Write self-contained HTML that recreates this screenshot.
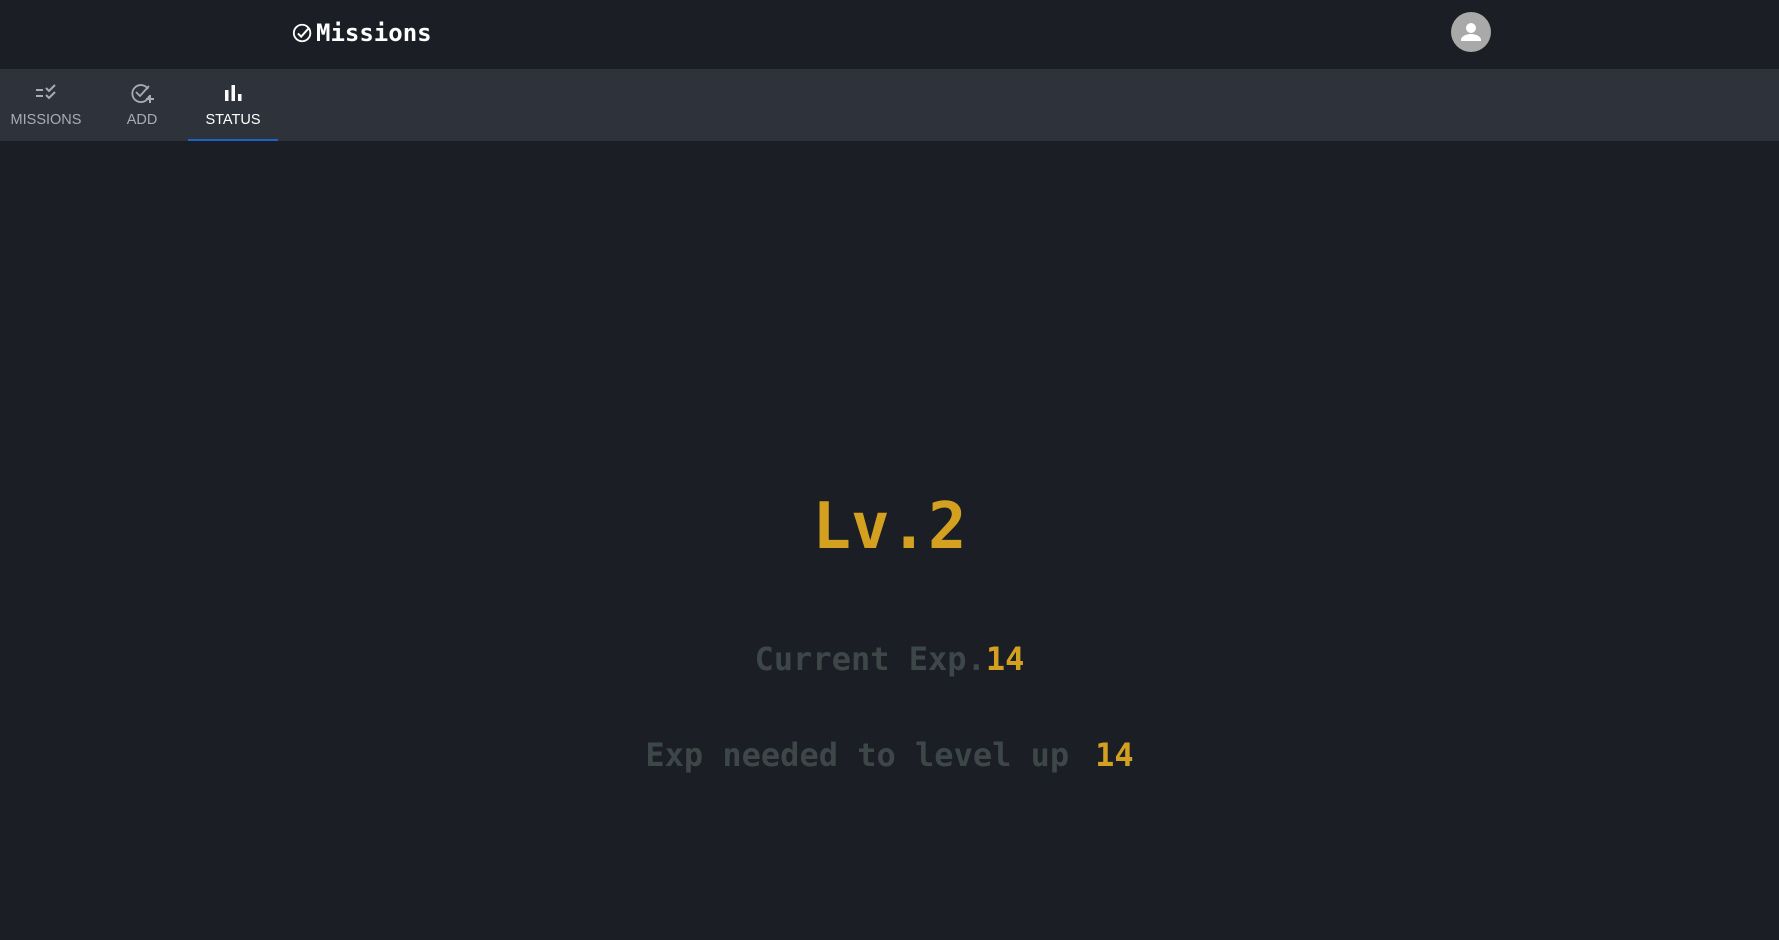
<!DOCTYPE html>
<html><head><meta charset="utf-8"><style>
*{margin:0;padding:0;box-sizing:border-box}
body{width:1779px;height:940px;background:#1b1e25;overflow:hidden;font-family:"Liberation Sans",sans-serif;position:relative}
.hdr{position:absolute;left:0;top:0;width:1779px;height:69px;background:#1b1e25}
.logo{position:absolute;left:292px;top:19px;display:flex;align-items:center;color:#fff;font:bold 24px "DejaVu Sans Mono","Liberation Mono",monospace}
.av{position:absolute;left:1451px;top:12px;width:40px;height:40px;border-radius:50%;background:#a9a9a9}
.nav{position:absolute;left:0;top:69px;width:1779px;height:72px;background:#2e323b}
.tab{position:absolute;top:0;height:72px;text-align:center;color:#a9acb2;font-size:14.5px}
.tab svg{position:absolute;top:14px}
.tab span{position:absolute;top:43px;left:0;right:0}
.ind{position:absolute;left:188px;top:70px;width:90px;height:2px;background:#1e63c4}
.mono{font-family:"DejaVu Sans Mono","Liberation Mono",monospace;font-weight:bold;position:absolute;left:0;width:1779px;text-align:center;white-space:pre}
.g{color:#d4a020}.d{color:#3d4748}
</style></head><body>
<div class="hdr">
 <div class="logo"><svg width="22" height="22" viewBox="0 0 24 24"><circle cx="11" cy="12" r="9" fill="none" stroke="#fff" stroke-width="2"/><path d="M6.5 12.5l3.5 3.5 8-9" fill="none" stroke="#fff" stroke-width="2.2"/></svg><span style="margin-left:2px">Missions</span></div>
 <div class="av"><svg width="40" height="40" viewBox="0 0 40 40"><circle cx="20" cy="16" r="5" fill="#fff"/><path d="M10 28c0-4 6-6 10-6s10 2 10 6v1H10z" fill="#fff"/></svg></div>
</div>
<div class="nav">
 <div class="tab" style="left:0;width:92px"><svg style="left:34px" width="24" height="20" viewBox="0 0 24 20"><path d="M2 7h7M2 13h7" stroke="#a9acb2" stroke-width="2"/><path d="M12 5l3 3 6-6M12 12l3 3 6-6" fill="none" stroke="#a9acb2" stroke-width="2"/></svg><span>MISSIONS</span></div>
 <div class="tab" style="left:112px;width:60px"><svg style="left:19px" width="24" height="22" viewBox="0 0 24 22"><path d="M17 6A8.5 8.5 0 1 0 18 13" fill="none" stroke="#a9acb2" stroke-width="1.8"/><path d="M5 9l4 4 9-10" fill="none" stroke="#a9acb2" stroke-width="1.8"/><path d="M19 12v8M15 16h8" stroke="#a9acb2" stroke-width="2"/></svg><span>ADD</span></div>
 <div class="tab" style="left:188px;width:90px;color:#fff"><svg style="left:36px" width="18" height="20" viewBox="0 0 18 20"><rect x="1" y="7" width="3.5" height="11" fill="#fff"/><rect x="7.5" y="2" width="3.5" height="16" fill="#fff"/><rect x="14" y="11" width="3.5" height="7" fill="#fff"/></svg><span>STATUS</span><div class="ind" style="left:0"></div></div>
</div>
<div class="mono g" style="top:487px;font-size:64px;line-height:80px">Lv.2</div>
<div class="mono" style="top:639px;font-size:32px;line-height:40px"><span class="d">Current Exp.</span><span class="g">14</span></div>
<div class="mono" style="top:735px;font-size:32px;line-height:40px"><span class="d">Exp needed to level up</span><span class="g" style="margin-left:26px">14</span></div>
</body></html>
